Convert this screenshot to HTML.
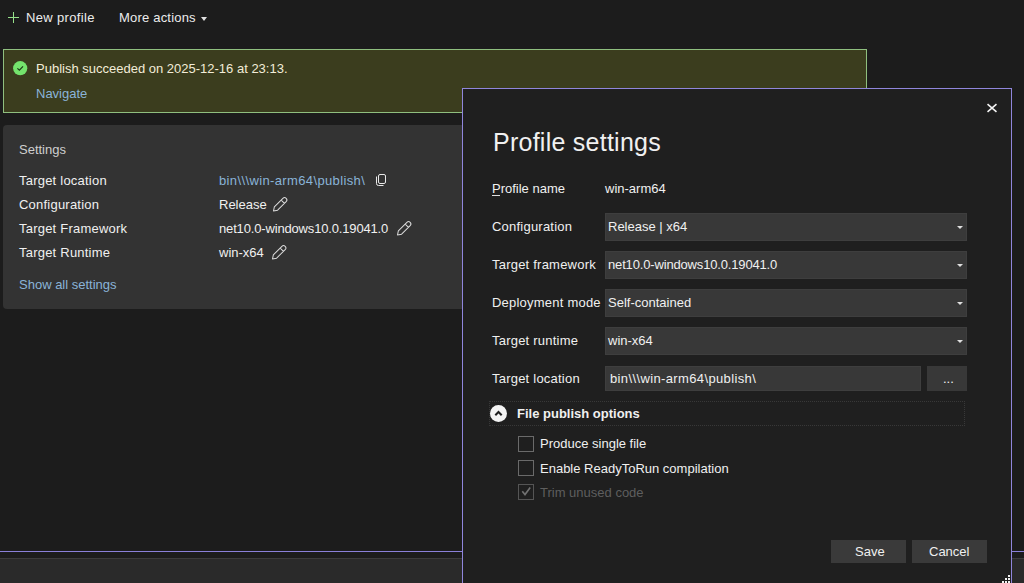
<!DOCTYPE html>
<html><head><meta charset="utf-8">
<style>
*{box-sizing:border-box;margin:0;padding:0}
html,body{width:1024px;height:583px;overflow:hidden;background:#1c1c1c;font-family:"Liberation Sans",sans-serif;font-size:13px;color:#f0f0f0}
.abs{position:absolute;white-space:pre;line-height:1}
#plus{position:absolute;left:8px;top:12px;width:11px;height:11px}
#banner{position:absolute;left:3px;top:49px;width:864px;height:64px;background:#3b3d1e;border:1px solid #8fbf7f}
#card{position:absolute;left:3px;top:125px;width:470px;height:184px;background:#333333;border-radius:4px}
#bottomline{position:absolute;left:0;top:551px;width:1024px;height:1px;background:#8a80d8}
#bottombar{position:absolute;left:0;top:558px;width:1024px;height:25px;background:#2a2a2a;border-top:1px solid #3c3c3c}
#dlg{position:absolute;left:462px;top:88px;width:550px;height:500px;background:#1f1f1f;border:1px solid #9086dc}
.combo{position:absolute;left:605px;width:362px;height:28px;background:#383838;border:1px solid #3e3e3e}
.arrow{position:absolute;right:3px;top:12px;width:0;height:0;border-left:3px solid transparent;border-right:3px solid transparent;border-top:3px solid #e0e0e0}
.cb{position:absolute;left:518px;width:16px;height:16px;border:1px solid #6a6a6a}
.btn{position:absolute;top:540px;width:75px;height:23px;background:#3a3a3a}
</style></head><body>
<svg id="plus" viewBox="0 0 11 11"><path d="M5.5 0V11M0 5.5H11" stroke="#96e08a" stroke-width="1"/></svg>
<div class="abs" style="left:26px;top:11px;color:#ececec;letter-spacing:0.35px">New profile</div>
<div class="abs" style="left:119px;top:11px;color:#ececec;letter-spacing:0.2px">More actions</div>
<div class="abs" style="left:201px;top:17px;width:0;height:0;border-left:3.5px solid transparent;border-right:3.5px solid transparent;border-top:4px solid #e0e0e0"></div>

<div id="banner"></div>
<svg style="position:absolute;left:13px;top:61px" width="15" height="15" viewBox="0 0 15 15"><circle cx="7.2" cy="7.2" r="7.1" fill="#74e36c"/><path d="M4.4 7.4L6.4 9.2L10 5.4" stroke="#1d3a18" stroke-width="1.2" fill="none"/></svg>
<div class="abs" style="left:36px;top:62px;color:#f2ecd8">Publish succeeded on 2025-12-16 at 23:13.</div>
<div class="abs" style="left:36px;top:87px;color:#8ab4d8">Navigate</div>

<div id="card"></div>
<div class="abs" style="left:19px;top:143px;color:#cfcfcf">Settings</div>
<div class="abs" style="left:19px;top:174px;letter-spacing:0.22px">Target location</div>
<div class="abs" style="left:19px;top:198px;letter-spacing:0.22px">Configuration</div>
<div class="abs" style="left:19px;top:222px;letter-spacing:0.22px">Target Framework</div>
<div class="abs" style="left:19px;top:246px;letter-spacing:0.22px">Target Runtime</div>
<div class="abs" style="left:19px;top:278px;color:#8ab4d8">Show all settings</div>
<div class="abs" style="left:219px;top:174px;color:#8ab4d8;letter-spacing:0.37px">bin\\\win-arm64\publish\</div>
<div class="abs" style="left:219px;top:198px">Release</div>
<div class="abs" style="left:219px;top:222px;letter-spacing:-0.16px">net10.0-windows10.0.19041.0</div>
<div class="abs" style="left:219px;top:246px">win-x64</div>

<div id="bottomline"></div>
<div id="bottombar"></div>

<div id="dlg"></div>
<div class="abs" style="left:493px;top:130px;font-size:25px;letter-spacing:0.25px;color:#f0f0f0">Profile settings</div>
<svg style="position:absolute;left:987px;top:103px" width="10" height="10" viewBox="0 0 10 10"><path d="M0.5 1.2L9.5 8.8M9.5 1.2L0.5 8.8" stroke="#f4f4f4" stroke-width="1.6"/></svg>

<div class="abs" style="left:492px;top:182px">Profile name</div>
<div class="abs" style="left:605px;top:182px">win-arm64</div>
<div class="abs" style="left:492px;top:220px;letter-spacing:0.22px">Configuration</div>
<div class="abs" style="left:492px;top:258px;letter-spacing:0.22px">Target framework</div>
<div class="abs" style="left:492px;top:296px;letter-spacing:0.22px">Deployment mode</div>
<div class="abs" style="left:492px;top:334px;letter-spacing:0.22px">Target runtime</div>
<div class="abs" style="left:492px;top:372px;letter-spacing:0.22px">Target location</div>

<div class="combo" style="top:213px"><div class="arrow"></div></div>
<div class="combo" style="top:251px"><div class="arrow"></div></div>
<div class="combo" style="top:289px"><div class="arrow"></div></div>
<div class="combo" style="top:327px"><div class="arrow"></div></div>
<div class="abs" style="left:608px;top:220px">Release | x64</div>
<div class="abs" style="left:608px;top:258px;letter-spacing:-0.16px">net10.0-windows10.0.19041.0</div>
<div class="abs" style="left:608px;top:296px">Self-contained</div>
<div class="abs" style="left:608px;top:334px">win-x64</div>

<div style="position:absolute;left:605px;top:366px;width:316px;height:25px;background:#383838;border:1px solid #3e3e3e"></div>
<div class="abs" style="left:610px;top:372px;letter-spacing:0.37px">bin\\\win-arm64\publish\</div>
<div style="position:absolute;left:927px;top:366px;width:40px;height:25px;background:#383838"></div>
<div class="abs" style="left:943px;top:372px">...</div>

<div style="position:absolute;left:489px;top:401px;width:476px;height:25px;border:1px dotted #383838"></div>
<svg style="position:absolute;left:490px;top:405px" width="17" height="17" viewBox="0 0 17 17"><circle cx="8.5" cy="8.5" r="8.5" fill="#f4f4f4"/><path d="M5.3 10.3L8.5 7L11.7 10.3" stroke="#1f1f1f" stroke-width="2" fill="none"/></svg>
<div class="abs" style="left:517px;top:407px;font-weight:bold">File publish options</div>

<div class="cb" style="top:436px"></div>
<div class="cb" style="top:460px"></div>
<div class="cb" style="top:484px;border-color:#555"></div>
<div class="abs" style="left:540px;top:437px">Produce single file</div>
<div class="abs" style="left:540px;top:462px">Enable ReadyToRun compilation</div>
<div class="abs" style="left:540px;top:486px;color:#5e5e5e">Trim unused code</div>

<div class="btn" style="left:831px"></div>
<div class="btn" style="left:912px"></div>
<div class="abs" style="left:855px;top:545px">Save</div>
<div class="abs" style="left:929px;top:545px">Cancel</div>

<svg style="position:absolute;left:0;top:0" width="1024" height="583" viewBox="0 0 1024 583">
<g fill="none" stroke="#e8e8e8" stroke-width="1">
<rect x="378.5" y="174.5" width="7" height="9" rx="1.5"/>
<path d="M376.5 176.5V183.5Q376.5 185.5 378.5 185.5H383.5"/>
</g>
<g fill="none" stroke="#dcdcdc" stroke-width="1" stroke-linejoin="round">
<path transform="translate(273.5 211) rotate(-45)" d="M0 0L3.5 -2.3H15.6A2.3 2.3 0 0 1 15.6 2.3H3.5Z M13.2 -2.3V2.3"/>
<path transform="translate(397.5 235) rotate(-45)" d="M0 0L3.5 -2.3H15.6A2.3 2.3 0 0 1 15.6 2.3H3.5Z M13.2 -2.3V2.3"/>
<path transform="translate(272.5 259) rotate(-45)" d="M0 0L3.5 -2.3H15.6A2.3 2.3 0 0 1 15.6 2.3H3.5Z M13.2 -2.3V2.3"/>
</g>
<path d="M522.3 491.2L525 494.6L530.2 487.6" fill="none" stroke="#727272" stroke-width="1.6"/>
<g fill="#f0f0f0">
<rect x="1008" y="575" width="2" height="2"/>
<rect x="1005" y="578" width="2" height="2"/><rect x="1008" y="578" width="2" height="2"/>
<rect x="1002" y="581" width="2" height="2"/><rect x="1005" y="581" width="2" height="2"/><rect x="1008" y="581" width="2" height="2"/>
</g>
<rect x="492" y="195" width="8" height="1" fill="#e0e0e0"/>
</svg>
</body></html>
